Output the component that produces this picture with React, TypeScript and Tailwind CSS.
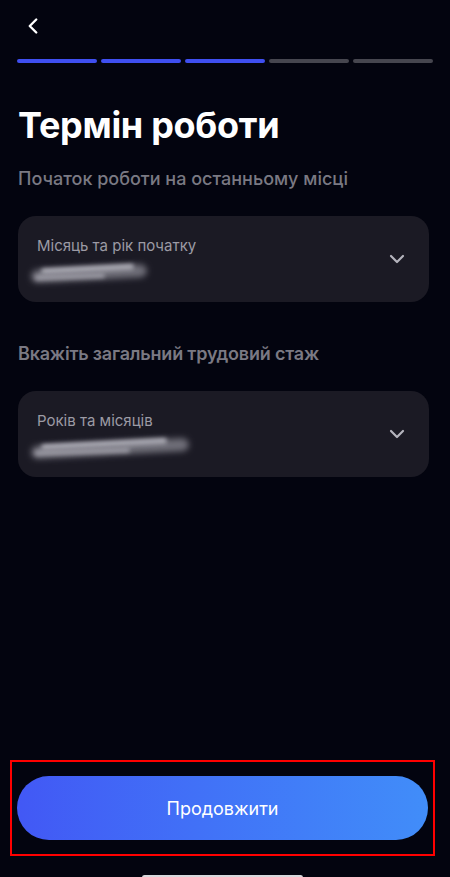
import { ChevronLeft, ChevronDown } from 'lucide-react';

const steps = [true, true, true, false, false];

function Scribble({ w }: { w: string }) {
  return (
    <div className={`relative mt-[5px] h-[22px] ${w} -ml-[6px]`}>
      <div className="absolute left-0 top-[6px] h-[13px] w-full rounded-full bg-[#6f6e78] blur-[3px] -rotate-3" />
      <div className="absolute left-[10px] top-[5px] h-[6px] w-[80%] rounded-full bg-[#a9a8b2] blur-[2px] -rotate-3" />
      <div className="absolute left-[4px] top-[13px] h-[5px] w-[60%] rounded-full bg-[#9a99a3] blur-[2px] -rotate-2" />
    </div>
  );
}

function SelectCard({ label, w }: { label: string; w: string }) {
  return (
    <div className="ml-[18px] mr-[21px] h-[86px] rounded-[18px] bg-[#1b1a24] flex items-center pl-[19px] pr-[20px]">
      <div className="flex-1 flex flex-col">
        <span className="text-[15px] leading-[20px] text-[#9c9ba5]">{label}</span>
        <Scribble w={w} />
      </div>
      <ChevronDown size={24} strokeWidth={2.2} className="text-[#b5b4bd]" />
    </div>
  );
}

export default function App() {
  return (
    <div
      className="relative w-[450px] h-[877px] bg-[#03040f] text-white flex flex-col overflow-hidden"
      style={{ fontFamily: 'Inter, "Noto Sans", sans-serif' }}
    >
      <div className="h-[50px] pl-[20px] pt-[13px]">
        <ChevronLeft size={26} strokeWidth={2.2} className="text-white" />
      </div>

      <div className="mt-[9px] px-[17px] flex gap-[4px]">
        {steps.map((on, i) => (
          <div key={i} className={`h-[4px] flex-1 rounded-full ${on ? 'bg-[#3f4ff0]' : 'bg-[#46464f]'}`} />
        ))}
      </div>

      <h1 className="mt-[40px] px-[18px] text-[36px] leading-[44px] font-bold tracking-[-0.3px]">Термін роботи</h1>

      <p className="mt-[21px] px-[18px] text-[18px] leading-[22px] font-medium text-[#7a7983]">
        Початок роботи на останньому місці
      </p>

      <div className="mt-[26px]">
        <SelectCard label="Місяць та рік початку" w="w-[116px]" />
      </div>

      <p className="mt-[41px] px-[18px] text-[18px] leading-[22px] font-semibold tracking-[-0.2px] text-[#7a7983]">
        Вкажіть загальний трудовий стаж
      </p>

      <div className="mt-[26px]">
        <SelectCard label="Років та місяців" w="w-[158px]" />
      </div>

      <div className="flex-1" />

      <div className="ml-[10px] mr-[15px] mb-[21px] border-2 border-[#ff0000] px-[5px] pt-[14px] pb-[14px]">
        <button className="w-full h-[64px] rounded-full bg-gradient-to-r from-[#4258f5] to-[#418df9] text-[18px] text-white">
          Продовжити
        </button>
      </div>

      <div className="absolute bottom-[-3px] left-[142px] w-[161px] h-[5px] rounded-full bg-[#d8d8dc]" />
    </div>
  );
}
